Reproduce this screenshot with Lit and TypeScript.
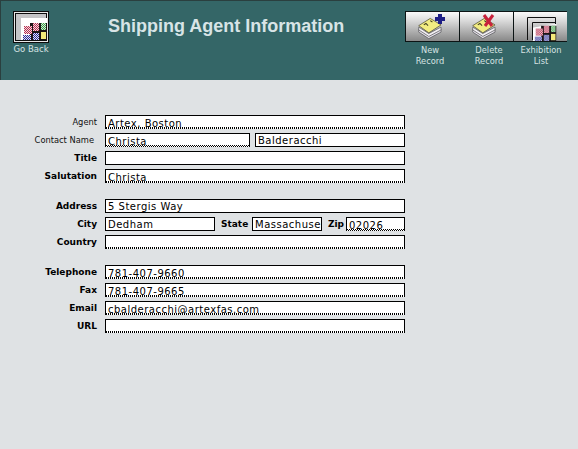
import { LitElement, html, css, svg } from "lit";
import { customElement } from "lit/decorators.js";

type Field = { value?: string; width?: number; dotted?: boolean };
type Part = { label: string; labelWidth: number; field: Field };
type Row = { label: string; strong?: boolean; gapAfter?: boolean; fields: Field[]; extras?: Part[] };

const rows: Row[] = [
  { label: "Agent", fields: [{ value: "Artex, Boston", dotted: true }] },
  {
    label: "Contact Name",
    fields: [{ value: "Christa", width: 145, dotted: true }, { value: "Balderacchi", width: 150 }],
  },
  { label: "Title", strong: true, fields: [{}] },
  { label: "Salutation", strong: true, gapAfter: true, fields: [{ value: "Christa", dotted: true }] },
  { label: "Address", strong: true, fields: [{ value: "5 Stergis Way" }] },
  {
    label: "City",
    strong: true,
    fields: [{ value: "Dedham", width: 110 }],
    extras: [
      { label: "State", labelWidth: 27, field: { value: "Massachuse", width: 70 } },
      { label: "Zip", labelWidth: 14, field: { value: "02026", width: 59, dotted: true } },
    ],
  },
  { label: "Country", strong: true, gapAfter: true, fields: [{ dotted: true }] },
  { label: "Telephone", strong: true, fields: [{ value: "781-407-9660", dotted: true }] },
  { label: "Fax", strong: true, fields: [{ value: "781-407-9665", dotted: true }] },
  { label: "Email", strong: true, fields: [{ value: "cbalderacchi@artexfas.com", dotted: true }] },
  { label: "URL", strong: true, fields: [{ dotted: true }] },
];

// little checkered "exhibition" picture, shared by Go Back and Exhibition List
const picture = svg`
  <path d="M0 4 L6 3 L14 1 L26 0 V19 H0Z" fill="#fff"/>
  <path d="M9 2 H26 V19 H9Z" fill="#1c1416"/>
  <rect x="3" y="5" width="8" height="8" fill="url(#red)"/>
  <rect x="12" y="2" width="6" height="8" fill="url(#red)"/>
  <rect x="20" y="2" width="5" height="7" fill="url(#green)"/>
  <rect x="2" y="14" width="8" height="5" fill="url(#blue)"/>
  <rect x="12" y="12" width="6" height="7" fill="url(#blue)"/>
  <rect x="20" y="11" width="5" height="7" fill="#f4e97a"/>`;

// stack of yellow cards used by New Record and Delete Record
const cards = svg`
  <path d="M1 17 L15 26 L32 17 V21 L15 30 L1 21Z" fill="#e6e2ea" stroke="#57575a"/>
  <path d="M1 14 L15 23 L32 14 V18 L15 27 L1 18Z" fill="#f1eef2" stroke="#57575a"/>
  <path d="M1 12 L17 2 L32 11 L15 22Z" fill="#f2ec82" stroke="#4c4a30"/>
  <path d="M8 11 L11 9 L14 12 M17 5 L20 7" fill="none" stroke="#3e3c20" stroke-width="1.4"/>`;

@customElement("app-root")
export class AppRoot extends LitElement {
  static styles = css`
    :host {
      display: block;
      width: 578px;
      height: 449px;
      overflow: hidden;
      background: #dfe2e4;
      font-family: "DejaVu Sans", sans-serif;
      color: #000;
    }

    .defs {
      position: absolute;
    }

    .header {
      display: flex;
      box-sizing: border-box;
      height: 80px;
      padding: 10px 11px 0 12px;
      background: #346667;
      border-top: 1px solid #2a3f3f;
      border-left: 1px solid #2a3f3f;
      color: #d6e3e3;
    }

    .back {
      width: 36px;
      font-size: 8.5px;
      line-height: 13px;
      text-align: center;
      white-space: nowrap;
    }

    .back svg,
    .tool svg {
      display: block;
    }

    h1 {
      flex: 1;
      margin: 5px 0 0 59px;
      font: bold 18px/20px "Liberation Sans", sans-serif;
      color: #d8e4e6;
    }

    .tools {
      width: 162px;
    }

    .strip {
      display: flex;
      border: 1px solid #0c1414;
      width: 162px;
      box-sizing: border-box;
      height: 31px;
    }

    .tool {
      flex: 1;
      background: linear-gradient(#fafafa, #e0e0e0 25%, #888);
    }

    .tool + .tool {
      border-left: 1px solid #0c1414;
    }

    .captions {
      display: grid;
      grid-template-columns: 50px 65px 42px;
      margin-top: 3px;
      font-size: 8.3px;
      line-height: 10.5px;
      text-align: center;
    }

    .captions .shifted {
      padding-left: 3px;
    }

    .form {
      display: flex;
      flex-direction: column;
      gap: 4px;
      padding-top: 35px;
    }

    .row {
      display: flex;
      align-items: flex-start;
      height: 14px;
    }

    .row.spaced {
      margin-bottom: 12px;
    }

    .label {
      width: 97px;
      margin-right: 8px;
      padding-top: 1px;
      font-size: 9px;
      line-height: 12px;
      text-align: right;
      white-space: nowrap;
    }

    .label.plain {
      font-size: 8.3px;
      color: #111;
    }

    .label.contact {
      padding-right: 3px;
      width: 94px;
    }

    .strong {
      font-weight: bold;
    }

    .inputs {
      display: flex;
      gap: 5px;
      width: 300px;
    }

    .field {
      box-sizing: border-box;
      flex: 1;
      height: 14px;
      padding: 1px 0 0 2px;
      overflow: hidden;
      background: #fff;
      border: 1px solid #000;
      font-size: 10px;
      line-height: 12px;
      letter-spacing: 0.5px;
      white-space: nowrap;
    }

    .field.dotted {
      padding-top: 2px;
      border-bottom-style: dotted;
      background-image: repeating-linear-gradient(90deg, #000 0 1px, transparent 1px 2px);
      background-size: 100% 1px;
      background-position: bottom;
      background-repeat: no-repeat;
    }

    .field.sized {
      flex: none;
    }

    .extra {
      flex: none;
      padding-top: 1px;
      font-size: 9px;
      font-weight: bold;
      line-height: 12px;
      margin: 0 -1px 0 1px;
      white-space: nowrap;
    }
  `;

  private renderField(f: Field) {
    const classes = `field ${f.dotted ? "dotted" : ""} ${f.width ? "sized" : ""}`;
    return html`<div class=${classes} style=${f.width ? `width:${f.width}px` : ""}>${f.value ?? ""}</div>`;
  }

  private renderRow(r: Row) {
    const labelClass = `label ${r.strong ? "strong" : "plain"} ${r.label === "Contact Name" ? "contact" : ""}`;
    return html`
      <div class="row ${r.gapAfter ? "spaced" : ""}">
        <div class=${labelClass}>${r.label}</div>
        <div class="inputs">
          ${r.fields.map((f) => this.renderField(f))}
          ${(r.extras ?? []).map(
            (e) => html`<span class="extra" style="width:${e.labelWidth}px">${e.label}</span>${this.renderField(e.field)}`
          )}
        </div>
      </div>
    `;
  }

  render() {
    return html`
      <svg class="defs" width="0" height="0">
        <defs>
          <pattern id="red" width="2" height="2" patternUnits="userSpaceOnUse">
            <rect width="2" height="2" fill="#f5d9e0"/><rect width="1" height="1" fill="#b5304f"/><rect x="1" y="1" width="1" height="1" fill="#b5304f"/>
          </pattern>
          <pattern id="green" width="2" height="2" patternUnits="userSpaceOnUse">
            <rect width="2" height="2" fill="#d5f0d0"/><rect width="1" height="1" fill="#3f9a50"/><rect x="1" y="1" width="1" height="1" fill="#3f9a50"/>
          </pattern>
          <pattern id="blue" width="2" height="2" patternUnits="userSpaceOnUse">
            <rect width="2" height="2" fill="#e4e4f6"/><rect width="1" height="1" fill="#2a2a90"/><rect x="1" y="1" width="1" height="1" fill="#2a2a90"/>
          </pattern>
        </defs>
      </svg>
      <header class="header">
        <div class="back">
          <svg width="36" height="32" viewBox="0 0 36 32">
            <rect width="36" height="32" fill="#0c0c0c"/>
            <rect x="1" y="1" width="34" height="30" fill="#e8e8e8"/>
            <rect x="2" y="2" width="32" height="28" fill="#0c0c0c"/>
            <path d="M3 3 H33 V7 H8 V29 H3Z" fill="#c4c4c6"/>
            <rect x="8" y="7" width="26" height="22" fill="#fff"/>
            <g transform="translate(8 10)">${picture}</g>
          </svg>
          Go Back
        </div>
        <h1>Shipping Agent Information</h1>
        <div class="tools">
          <div class="strip">
            <div class="tool">
              <svg width="53" height="29" viewBox="0 0 53 29">
                <g transform="translate(12 5) scale(.72)">${cards}</g>
                <path d="M29 5 H32 V2 H36 V5 H39 V9 H36 V12 H32 V9 H29Z" fill="#1f1f86"/>
              </svg>
            </div>
            <div class="tool">
              <svg width="53" height="29" viewBox="0 0 53 29">
                <g transform="translate(12 5) scale(.72)">${cards}</g>
                <path d="M24 3 L32 14 M33 3 L25 14" fill="none" stroke="#c8223c" stroke-width="3"/>
              </svg>
            </div>
            <div class="tool">
              <svg width="53" height="29" viewBox="0 0 53 29">
                <path d="M13.5 28 V5.5 H41.5 V12" fill="none" stroke="#111"/>
                <path d="M18.5 28 V10.5 H41" fill="none" stroke="#111"/>
                <g transform="translate(19 12) scale(.9)">${picture}</g>
              </svg>
            </div>
          </div>
          <div class="captions">
            <div>New<br />Record</div>
            <div class="shifted">Delete<br />Record</div>
            <div>Exhibition<br />List</div>
          </div>
        </div>
      </header>
      <main class="form">${rows.map((r) => this.renderRow(r))}</main>
    `;
  }
}

declare global {
  interface HTMLElementTagNameMap {
    "app-root": AppRoot;
  }
}
